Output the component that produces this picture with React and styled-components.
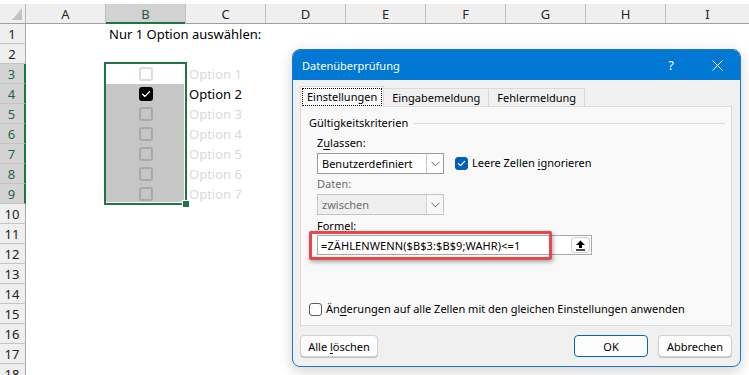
import React from "react";
import styled, { createGlobalStyle } from "styled-components";

const Global = createGlobalStyle`
  html, body { margin: 0; padding: 0; background: #fff; }
  body { width: 749px; height: 375px; overflow: hidden; }
`;

const GREEN = "#217346";

const Page = styled.div`
  position: relative;
  width: 749px;
  height: 375px;
  overflow: hidden;
  font-family: "Noto Sans", "Open Sans", sans-serif;
`;

const Sheet = styled.div`
  display: flex;
  flex-direction: column;
  padding-top: 4px;
`;

const HeaderRow = styled.div`
  display: flex;
  height: 19px;
  background: #efefef;
  border-bottom: 1px solid #a0a0a0;
  box-sizing: content-box;
`;

const Corner = styled.div`
  flex: none;
  border-right: 1px solid #b8b8b8;
  display: flex;
  align-items: flex-end;
  justify-content: flex-end;
  padding: 0 3px 3px 0;
  box-sizing: content-box;
  width: 22px;
`;

const ColHeader = styled.div`
  width: ${(p) => p.$w || 80}px;
  flex: none;
  box-sizing: border-box;
  border-right: 1px solid #c0c0c0;
  display: flex;
  align-items: center;
  justify-content: center;
  font-size: 13px;
  color: ${(p) => (p.$sel ? "#1b5e38" : "#262626")};
  background: ${(p) => (p.$sel ? "#d2d2d2" : "transparent")};
  box-shadow: ${(p) => (p.$sel ? `inset 0 -2px 0 ${GREEN}` : "none")};
  margin-bottom: ${(p) => (p.$sel ? "-1px" : "0")};
`;

const Row = styled.div`
  display: flex;
  height: 20px;
`;

const RowHeader = styled.div`
  width: 26px;
  flex: none;
  box-sizing: border-box;
  border-right: ${(p) => (p.$sel ? `2px solid ${GREEN}` : "1px solid #a8a8a8")};
  border-bottom: 1px solid #c4c4c4;
  background: ${(p) => (p.$sel ? "#d3d3d3" : "#efefef")};
  color: ${(p) => (p.$sel ? "#1b6a3f" : "#222")};
  font-size: 13px;
  display: flex;
  align-items: center;
  justify-content: center;
  padding-right: 1px;
`;

const Cell = styled.div`
  width: 80px;
  flex: none;
  box-sizing: border-box;
  position: relative;
  display: flex;
  align-items: center;
  justify-content: ${(p) => (p.$center ? "center" : "flex-start")};
  padding-left: ${(p) => (p.$center ? 0 : 3)}px;
  white-space: nowrap;
  font-size: 13px;
  color: ${(p) => p.$color || "#000"};
  background: ${(p) => p.$fill || "transparent"};
`;

const Selection = styled.div`
  position: absolute;
  left: 104px;
  top: 62px;
  width: 83px;
  height: 143px;
  box-sizing: border-box;
  border: 2px solid ${GREEN};
  pointer-events: none;
`;

const SelFill = styled.div`
  position: absolute;
  left: 106px;
  top: 84px;
  width: 78px;
  height: 118px;
  background: #c6c6c6;
`;

const Handle = styled.div`
  position: absolute;
  left: 182px;
  top: 200px;
  width: 6px;
  height: 6px;
  background: ${GREEN};
  border: 1px solid #fff;
  box-sizing: content-box;
`;

const Box = styled.div`
  width: 14px;
  height: 14px;
  box-sizing: border-box;
  border-radius: 3px;
  border: 2px solid ${(p) => p.$border};
  background: ${(p) => p.$bg || "transparent"};
  display: flex;
  align-items: center;
  justify-content: center;
  position: relative;
  z-index: 1;
`;

/* Dialog */
const Dialog = styled.div`
  position: absolute;
  left: 292px;
  top: 49px;
  width: 449px;
  height: 318px;
  box-sizing: border-box;
  border: 1px solid #1a78d0;
  border-radius: 8px;
  overflow: hidden;
  background: #f0f0f0;
  display: flex;
  flex-direction: column;
  font-family: "Segoe UI", "Noto Sans", sans-serif;
  font-size: 11px;
  color: #000;
  box-shadow: 0 4px 14px rgba(0, 0, 0, 0.18);
`;

const TitleBar = styled.div`
  height: 30px;
  flex: none;
  background: #0078d4;
  color: #fff;
  display: flex;
  align-items: center;
  padding-left: 9px;
  font-size: 11px;
`;

const TitleText = styled.div`
  flex: 1;
`;

const TitleBtn = styled.div`
  width: 46px;
  height: 30px;
  display: flex;
  align-items: center;
  justify-content: center;
  font-size: 13px;
  color: #fff;
`;

const Body = styled.div`
  flex: 1;
  display: flex;
  flex-direction: column;
  padding: 7px 8px 7px 7px;
`;

const Tabs = styled.div`
  display: flex;
  height: 20px;
  align-items: flex-end;
  margin-bottom: -1px;
  position: relative;
  z-index: 1;
`;

const Tab = styled.div`
  height: ${(p) => (p.$active ? 21 : 19)}px;
  box-sizing: border-box;
  border: 1px solid #dadada;
  border-bottom: ${(p) => (p.$active ? "1px solid #f9f9f9" : "1px solid #dadada")};
  background: ${(p) => (p.$active ? "#f9f9f9" : "#f0f0f0")};
  padding: ${(p) => (p.$active ? "1px 2px" : "0 8px")};
  margin-left: ${(p) => (p.$first ? 0 : -1)}px;
  display: flex;
  align-items: center;
  white-space: nowrap;
`;

const FocusText = styled.span`
  outline: 1px dotted #000;
  padding: 0 4px;
  line-height: 16px;
`;

const Panel = styled.div`
  height: 220px;
  box-sizing: border-box;
  border: 1px solid #dadada;
  background: #f9f9f9;
  display: flex;
  flex-direction: column;
  padding-bottom: 8px;
`;

const GroupHeader = styled.div`
  display: flex;
  align-items: center;
  margin-top: 8px;
  padding: 0 6px 0 8px;
  line-height: 16px;
`;

const GroupLine = styled.div`
  flex: 1;
  height: 1px;
  background: #dcdcdc;
  margin-left: 6px;
`;

const Fields = styled.div`
  padding-left: 16px;
  display: flex;
  flex-direction: column;
`;

const Label = styled.div`
  line-height: 16px;
  margin-top: ${(p) => p.$mt || 0}px;
  color: ${(p) => (p.$disabled ? "#6d6d6d" : "#000")};
`;

const SelectRow = styled.div`
  display: flex;
  align-items: flex-start;
  margin-top: 2px;
`;

const Select = styled.div`
  width: 127px;
  height: 21px;
  box-sizing: border-box;
  border: 1px solid ${(p) => (p.$disabled ? "#c4c4c4" : "#9a9a9a")};
  background: ${(p) => (p.$disabled ? "#efefef" : "#fff")};
  color: ${(p) => (p.$disabled ? "#6d6d6d" : "#000")};
  display: flex;
  align-items: stretch;
`;

const SelectText = styled.div`
  flex: 1;
  display: flex;
  align-items: center;
  padding-left: 4px;
`;

const DropBtn = styled.div`
  width: 16px;
  border-left: 1px solid ${(p) => (p.$disabled ? "#d4d4d4" : "#c8c8c8")};
  background: ${(p) => (p.$disabled ? "#f7f7f7" : "#fff")};
  display: flex;
  align-items: center;
  justify-content: center;
`;

const CheckLine = styled.label`
  display: flex;
  align-items: center;
  gap: 4px;
  line-height: 16px;
  margin-left: ${(p) => p.$ml || 0}px;
  margin-top: ${(p) => p.$mt || 0}px;
`;

const SmallBox = styled.span`
  width: 13px;
  height: 13px;
  box-sizing: border-box;
  border-radius: 3px;
  border: 1px solid ${(p) => (p.$checked ? "#005fb8" : "#5c5c5c")};
  background: ${(p) => (p.$checked ? "#005fb8" : "#fdfdfd")};
  display: flex;
  align-items: center;
  justify-content: center;
`;

const FormulaWrap = styled.div`
  position: relative;
  margin-top: 1px;
  width: 275px;
`;

const Input = styled.div`
  height: 20px;
  box-sizing: border-box;
  border: 1px solid #a8a8a8;
  background: #fff;
  display: flex;
  align-items: center;
  padding-left: 3px;
  padding-right: 1px;
`;

const InputText = styled.div`
  flex: 1;
  white-space: nowrap;
  letter-spacing: 0.1px;
`;

const RefBtn = styled.div`
  width: 19px;
  height: 16px;
  box-sizing: border-box;
  border: 1px solid #cfcfcf;
  border-radius: 3px;
  background: #fcfcfc;
  display: flex;
  align-items: center;
  justify-content: center;
`;

const Highlight = styled.div`
  position: absolute;
  left: -8px;
  top: -4px;
  width: 243px;
  height: 29px;
  box-sizing: border-box;
  border: 3px solid #e8464b;
  border-radius: 2px;
  box-shadow: 1px 2px 4px rgba(0, 0, 0, 0.35);
  pointer-events: none;
`;

const Bottom = styled.div`
  margin-top: auto;
  padding-left: 8px;
`;

const Buttons = styled.div`
  display: flex;
  align-items: center;
  margin-top: 9px;
  height: 22px;
`;

const Button = styled.div`
  width: ${(p) => p.$w}px;
  height: 22px;
  box-sizing: border-box;
  border: 1px solid ${(p) => (p.$primary ? "#0067c0" : "#d0d0d0")};
  border-radius: 4px;
  background: #fdfdfd;
  display: flex;
  align-items: center;
  justify-content: center;
  margin-left: ${(p) => p.$ml || 0}px;
  box-shadow: ${(p) => (p.$primary ? "none" : "0 1px 0 #c4c4c4")};
`;

const Spacer = styled.div`
  flex: 1;
`;

const U = styled.span`
  text-decoration: underline;
  text-underline-offset: 2px;
`;

const Check = ({ color = "#fff", size = 14 }) => (
  <svg width={size - 4} height={size - 4} viewBox="0 0 10 10">
    <path d="M1.6 5.2 L4 7.4 L8.4 2.6" fill="none" stroke={color} strokeWidth="1.4" strokeLinecap="round" strokeLinejoin="round" />
  </svg>
);

const Chevron = () => (
  <svg width="9" height="6" viewBox="0 0 9 6">
    <path d="M0.5 0.8 L4.5 4.8 L8.5 0.8" fill="none" stroke="#606060" strokeWidth="1" />
  </svg>
);

const cols = ["A", "B", "C", "D", "E", "F", "G", "H", "I"];
const options = {
  3: { text: "Option 1", state: "light" },
  4: { text: "Option 2", state: "checked" },
  5: { text: "Option 3" },
  6: { text: "Option 4" },
  7: { text: "Option 5" },
  8: { text: "Option 6" },
  9: { text: "Option 7" },
};

function CellBox({ state }) {
  if (state === "checked")
    return (
      <Box $border="#000" $bg="#000">
        <Check />
      </Box>
    );
  if (state === "light") return <Box $border="#dcdcdc" $bg="#fff" />;
  return <Box $border="#a9a9a9" />;
}

export default function App() {
  const rows = Array.from({ length: 18 }, (_, i) => i + 1);
  return (
    <Page>
      <Global />
      <Sheet>
        <HeaderRow>
          <Corner>
            <svg width="10" height="12" viewBox="0 0 10 12">
              <polygon points="10,0 10,12 0,12" fill="#c2c2c2" />
            </svg>
          </Corner>
          {cols.map((c) => (
            <ColHeader key={c} $sel={c === "B"} $w={c === "I" ? 84 : 80}>
              {c}
            </ColHeader>
          ))}
        </HeaderRow>
        {rows.map((r) => {
          const sel = r >= 3 && r <= 9;
          const opt = options[r];
          return (
            <Row key={r}>
              <RowHeader $sel={sel}>{r}</RowHeader>
              <Cell />
              {r === 1 ? (
                <Cell>Nur 1 Option auswählen:</Cell>
              ) : opt ? (
                <Cell $center>
                  <CellBox state={opt.state} />
                </Cell>
              ) : (
                <Cell />
              )}
              {opt ? (
                <Cell $color={opt.state === "checked" ? "#000" : "#d9d9d9"}>{opt.text}</Cell>
              ) : (
                <Cell />
              )}
            </Row>
          );
        })}
      </Sheet>
      <SelFill />
      <Selection />
      <Handle />

      <Dialog>
        <TitleBar>
          <TitleText>Datenüberprüfung</TitleText>
          <TitleBtn>?</TitleBtn>
          <TitleBtn>
            <svg width="11" height="11" viewBox="0 0 11 11">
              <path d="M0.5 0.5 L10.5 10.5 M10.5 0.5 L0.5 10.5" stroke="#fff" strokeWidth="1" />
            </svg>
          </TitleBtn>
        </TitleBar>
        <Body>
          <Tabs>
            <Tab $active $first>
              <FocusText>Einstellungen</FocusText>
            </Tab>
            <Tab>Eingabemeldung</Tab>
            <Tab>Fehlermeldung</Tab>
          </Tabs>
          <Panel>
            <GroupHeader>
              <span>Gültigkeitskriterien</span>
              <GroupLine />
            </GroupHeader>
            <Fields>
              <Label $mt={4}>
                Z<U>u</U>lassen:
              </Label>
              <SelectRow>
                <Select>
                  <SelectText>Benutzerdefiniert</SelectText>
                  <DropBtn>
                    <Chevron />
                  </DropBtn>
                </Select>
                <CheckLine $ml={11} $mt={2}>
                  <SmallBox $checked>
                    <Check size={13} />
                  </SmallBox>
                  <span>
                    Leere Zellen <U>i</U>gnorieren
                  </span>
                </CheckLine>
              </SelectRow>
              <Label $mt={2} $disabled>
                Daten:
              </Label>
              <SelectRow>
                <Select $disabled>
                  <SelectText>zwischen</SelectText>
                  <DropBtn $disabled>
                    <Chevron />
                  </DropBtn>
                </Select>
              </SelectRow>
              <Label $mt={3}>Formel:</Label>
              <FormulaWrap>
                <Input>
                  <InputText>=ZÄHLENWENN($B$3:$B$9;WAHR)&lt;=1</InputText>
                  <RefBtn>
                    <svg width="11" height="11" viewBox="0 0 11 11">
                      <path d="M5.5 0.5 L10 5 L7 5 L7 8 L4 8 L4 5 L1 5 Z" fill="#000" />
                      <rect x="1" y="9.3" width="9" height="1.4" fill="#000" />
                    </svg>
                  </RefBtn>
                </Input>
                <Highlight />
              </FormulaWrap>
            </Fields>
            <Bottom>
              <CheckLine>
                <SmallBox />
                <span>
                  Än<U>d</U>erungen auf alle Zellen mit den gleichen Einstellungen anwenden
                </span>
              </CheckLine>
            </Bottom>
          </Panel>
          <Buttons>
            <Button $w={78}>
              <span>
                Alle <U>l</U>öschen
              </span>
            </Button>
            <Spacer />
            <Button $w={74} $primary>
              OK
            </Button>
            <Button $w={74} $ml={10}>
              Abbrechen
            </Button>
          </Buttons>
        </Body>
      </Dialog>
    </Page>
  );
}
